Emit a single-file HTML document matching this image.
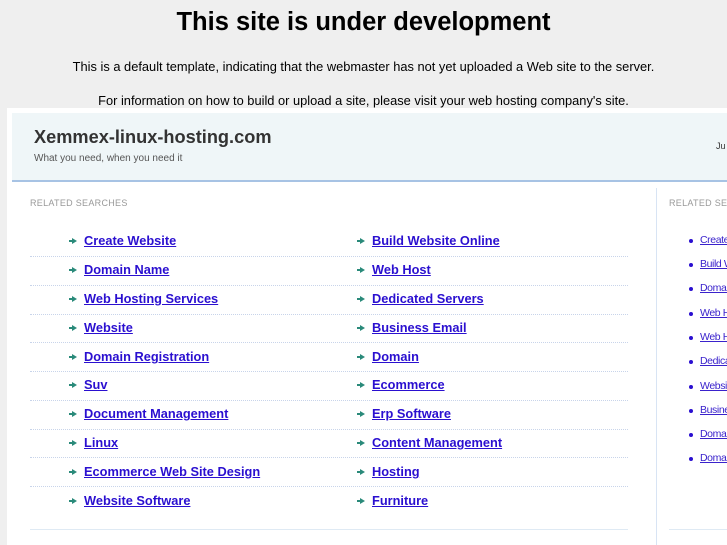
<!DOCTYPE html>
<html style="width:727px;height:545px;overflow:hidden"><head><meta charset="utf-8"><style>
*{margin:0;padding:0;box-sizing:border-box}
body{width:727px;height:545px;overflow:hidden;background:#efefef;font-family:"Liberation Sans",sans-serif;position:relative;white-space:nowrap}
h1{position:absolute;top:8px;left:0;width:727px;text-align:center;font-size:25.5px;font-weight:bold;color:#000}
.p{position:absolute;left:0;width:727px;text-align:center;font-size:12.85px;color:#000}
#panel{position:absolute;left:7px;top:108px;width:720px;height:437px;background:#fff}
#hdr{position:absolute;left:12px;top:113px;width:715px;height:69px;background:#eff6f8;border-bottom:2px solid #a7c3e4}
.ttl{position:absolute;left:34px;top:127px;font-size:18.2px;font-weight:bold;color:#333}
.sub{position:absolute;left:34px;top:153px;font-size:10px;color:#555}
.rs{position:absolute;font-size:9px;color:#999;letter-spacing:.3px}
.sep{position:absolute;left:30px;width:598px;border-top:1px dotted #c8d4ea}
.lk{position:absolute;font-size:12.8px;font-weight:bold;color:#2a0fd0;text-decoration:underline}
.ar{position:absolute;width:0;height:0;border-left:5px solid #2a8a7a;border-top:3px solid transparent;border-bottom:3px solid transparent}
.ar::before{content:"";position:absolute;left:-8px;top:-1px;width:4px;height:2px;background:#2a8a7a}
.vl{position:absolute;left:656px;top:188px;width:1px;height:357px;background:#d8e4f4}
#clip{position:absolute;left:657px;top:108px;width:70px;height:437px;overflow:hidden}
.rl{position:absolute;left:43px;font-size:10.5px;color:#3a22cc;text-decoration:underline;letter-spacing:-.4px}
.bu{position:absolute;left:32px;width:4px;height:4px;border-radius:2px;background:#2a0fd0}
.bl{position:absolute;top:529px;height:1px;background:#dfeaf4}
</style></head><body>
<h1>This site is under development</h1>
<div class="p" style="top:59px">This is a default template, indicating that the webmaster has not yet uploaded a Web site to the server.</div>
<div class="p" style="top:93px">For information on how to build or upload a site, please visit your web hosting company's site.</div>
<div id="panel"></div>
<div id="hdr"></div>
<div class="ttl">Xemmex-linux-hosting.com</div>
<div class="sub">What you need, when you need it</div>
<div class="rs" style="left:30px;top:198px">RELATED SEARCHES</div>
<div class="vl"></div>
<div class="bl" style="left:30px;width:598px"></div>

<div class="ar" style="left:72px;top:238px"></div><a class="lk" style="left:84px;top:233px">Create Website</a>
<div class="ar" style="left:360px;top:238px"></div><a class="lk" style="left:372px;top:233px">Build Website Online</a>
<div class="sep" style="top:256px"></div>
<div class="ar" style="left:72px;top:267px"></div><a class="lk" style="left:84px;top:262px">Domain Name</a>
<div class="ar" style="left:360px;top:267px"></div><a class="lk" style="left:372px;top:262px">Web Host</a>
<div class="sep" style="top:285px"></div>
<div class="ar" style="left:72px;top:296px"></div><a class="lk" style="left:84px;top:291px">Web Hosting Services</a>
<div class="ar" style="left:360px;top:296px"></div><a class="lk" style="left:372px;top:291px">Dedicated Servers</a>
<div class="sep" style="top:314px"></div>
<div class="ar" style="left:72px;top:325px"></div><a class="lk" style="left:84px;top:320px">Website</a>
<div class="ar" style="left:360px;top:325px"></div><a class="lk" style="left:372px;top:320px">Business Email</a>
<div class="sep" style="top:342px"></div>
<div class="ar" style="left:72px;top:354px"></div><a class="lk" style="left:84px;top:349px">Domain Registration</a>
<div class="ar" style="left:360px;top:354px"></div><a class="lk" style="left:372px;top:349px">Domain</a>
<div class="sep" style="top:371px"></div>
<div class="ar" style="left:72px;top:382px"></div><a class="lk" style="left:84px;top:377px">Suv</a>
<div class="ar" style="left:360px;top:382px"></div><a class="lk" style="left:372px;top:377px">Ecommerce</a>
<div class="sep" style="top:400px"></div>
<div class="ar" style="left:72px;top:411px"></div><a class="lk" style="left:84px;top:406px">Document Management</a>
<div class="ar" style="left:360px;top:411px"></div><a class="lk" style="left:372px;top:406px">Erp Software</a>
<div class="sep" style="top:429px"></div>
<div class="ar" style="left:72px;top:440px"></div><a class="lk" style="left:84px;top:435px">Linux</a>
<div class="ar" style="left:360px;top:440px"></div><a class="lk" style="left:372px;top:435px">Content Management</a>
<div class="sep" style="top:457px"></div>
<div class="ar" style="left:72px;top:469px"></div><a class="lk" style="left:84px;top:464px">Ecommerce Web Site Design</a>
<div class="ar" style="left:360px;top:469px"></div><a class="lk" style="left:372px;top:464px">Hosting</a>
<div class="sep" style="top:486px"></div>
<div class="ar" style="left:72px;top:498px"></div><a class="lk" style="left:84px;top:493px">Website Software</a>
<div class="ar" style="left:360px;top:498px"></div><a class="lk" style="left:372px;top:493px">Furniture</a>

<div id="clip">
<div style="position:absolute;left:59px;top:33px;font-size:9px;color:#333">Ju</div>
<div class="rs" style="left:12px;top:90px">RELATED SEARCHES</div>
<div class="bl" style="left:12px;top:421px;width:58px"></div>
<div class="bu" style="top:131px"></div><a class="rl" style="top:126px">Create Website</a>
<div class="bu" style="top:155px"></div><a class="rl" style="top:150px">Build Website</a>
<div class="bu" style="top:179px"></div><a class="rl" style="top:174px">Domain Name</a>
<div class="bu" style="top:204px"></div><a class="rl" style="top:199px">Web Hosting</a>
<div class="bu" style="top:228px"></div><a class="rl" style="top:223px">Web Host</a>
<div class="bu" style="top:252px"></div><a class="rl" style="top:247px">Dedicated</a>
<div class="bu" style="top:277px"></div><a class="rl" style="top:272px">Website</a>
<div class="bu" style="top:301px"></div><a class="rl" style="top:296px">Business</a>
<div class="bu" style="top:325px"></div><a class="rl" style="top:320px">Domain</a>
<div class="bu" style="top:349px"></div><a class="rl" style="top:344px">Domain</a>
</div>
</body></html>
